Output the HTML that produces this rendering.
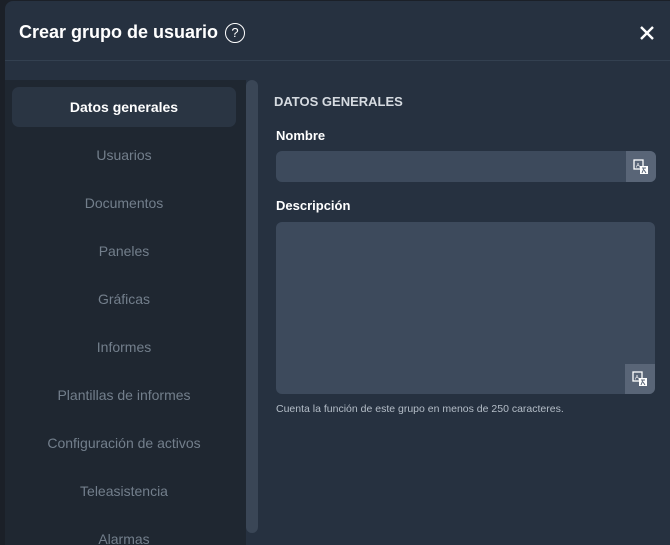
<!DOCTYPE html>
<html style="width:670px;height:545px;overflow:hidden"><head><meta charset="utf-8"><style>
*{margin:0;padding:0;box-sizing:border-box}
body{width:670px;height:545px;background:#1b2028;font-family:"Liberation Sans",sans-serif;overflow:hidden;position:relative}
.modal{position:absolute;left:5px;top:1px;width:665px;height:544px;background:#263140;border-radius:8px 0 0 0;overflow:hidden}
.title{position:absolute;left:14px;top:21px;font-size:18px;font-weight:bold;color:#fff}
.help{position:absolute;left:220px;top:22px;width:20px;height:20px;border:1.5px solid #fff;border-radius:50%;color:#fff;font-size:13px;text-align:center;line-height:17px}
.sep{position:absolute;left:0;top:59px;width:100%;height:1px;background:#334050}
.side{position:absolute;left:0;top:79px;width:241px;height:465px;background:#1f2731}
.scroll{position:absolute;left:241px;top:79px;width:12px;height:453px;background:#3a4656;border-radius:6px}
.item{position:absolute;left:0;width:238px;text-align:center;font-size:14px;color:#737f8c;line-height:16px}
.active{position:absolute;left:7px;top:86px;width:224px;height:40px;background:#2a3543;border-radius:7px}
.h{position:absolute;left:269px;top:93px;font-size:13px;font-weight:bold;color:#d6dbe1}
.lbl{position:absolute;left:271px;font-size:13px;font-weight:bold;color:#fff}
.inp{position:absolute;left:271px;background:#3d4a5c;border-radius:6px;overflow:hidden}
.tb{position:absolute;right:0;width:30px;height:30px;background:#596577;display:flex;align-items:center;justify-content:center}
.hint{position:absolute;left:271px;top:402px;font-size:10.5px;color:#b4bdc7}
</style></head><body>
<div class="modal">
<div class="title">Crear grupo de usuario</div>
<div class="help">?</div>
<svg style="position:absolute;left:635px;top:25px" width="14" height="14" viewBox="0 0 14 14"><path d="M1 1L13 13M13 1L1 13" stroke="#fff" stroke-width="2.4"/></svg>
<div class="sep"></div>
<div class="side"></div>
<div class="scroll"></div>
<div class="active"></div>
<div class="item" style="top:98px;color:#fff;font-weight:bold">Datos generales</div>
<div class="item" style="top:146px">Usuarios</div>
<div class="item" style="top:194px">Documentos</div>
<div class="item" style="top:242px">Paneles</div>
<div class="item" style="top:290px">Gráficas</div>
<div class="item" style="top:338px">Informes</div>
<div class="item" style="top:386px">Plantillas de informes</div>
<div class="item" style="top:434px">Configuración de activos</div>
<div class="item" style="top:482px">Teleasistencia</div>
<div class="item" style="top:530px;height:14px;overflow:hidden">Alarmas</div>
<div class="h">DATOS GENERALES</div>
<div class="lbl" style="top:127px">Nombre</div>
<div class="inp" style="top:150px;width:380px;height:31px"><div class="tb" style="top:0;height:31px"><svg width="16" height="16" viewBox="0 0 16 16"><rect x="1" y="1" width="9" height="9" fill="none" stroke="#fff" stroke-width="1.3"/><text x="3" y="8.5" font-size="6" fill="#fff" font-family="Liberation Sans">A</text><rect x="7" y="7" width="8" height="8" fill="#fff"/><path d="M9 9h4M11 9l-2 5M11 11l2 3" stroke="#596577" stroke-width="1"/></svg></div></div>
<div class="lbl" style="top:197px">Descripción</div>
<div class="inp" style="top:221px;width:379px;height:172px"><div class="tb" style="bottom:0"><svg width="16" height="16" viewBox="0 0 16 16"><rect x="1" y="1" width="9" height="9" fill="none" stroke="#fff" stroke-width="1.3"/><text x="3" y="8.5" font-size="6" fill="#fff" font-family="Liberation Sans">A</text><rect x="7" y="7" width="8" height="8" fill="#fff"/><path d="M9 9h4M11 9l-2 5M11 11l2 3" stroke="#596577" stroke-width="1"/></svg></div></div>
<div class="hint">Cuenta la función de este grupo en menos de 250 caracteres.</div>
</div>
</body></html>
